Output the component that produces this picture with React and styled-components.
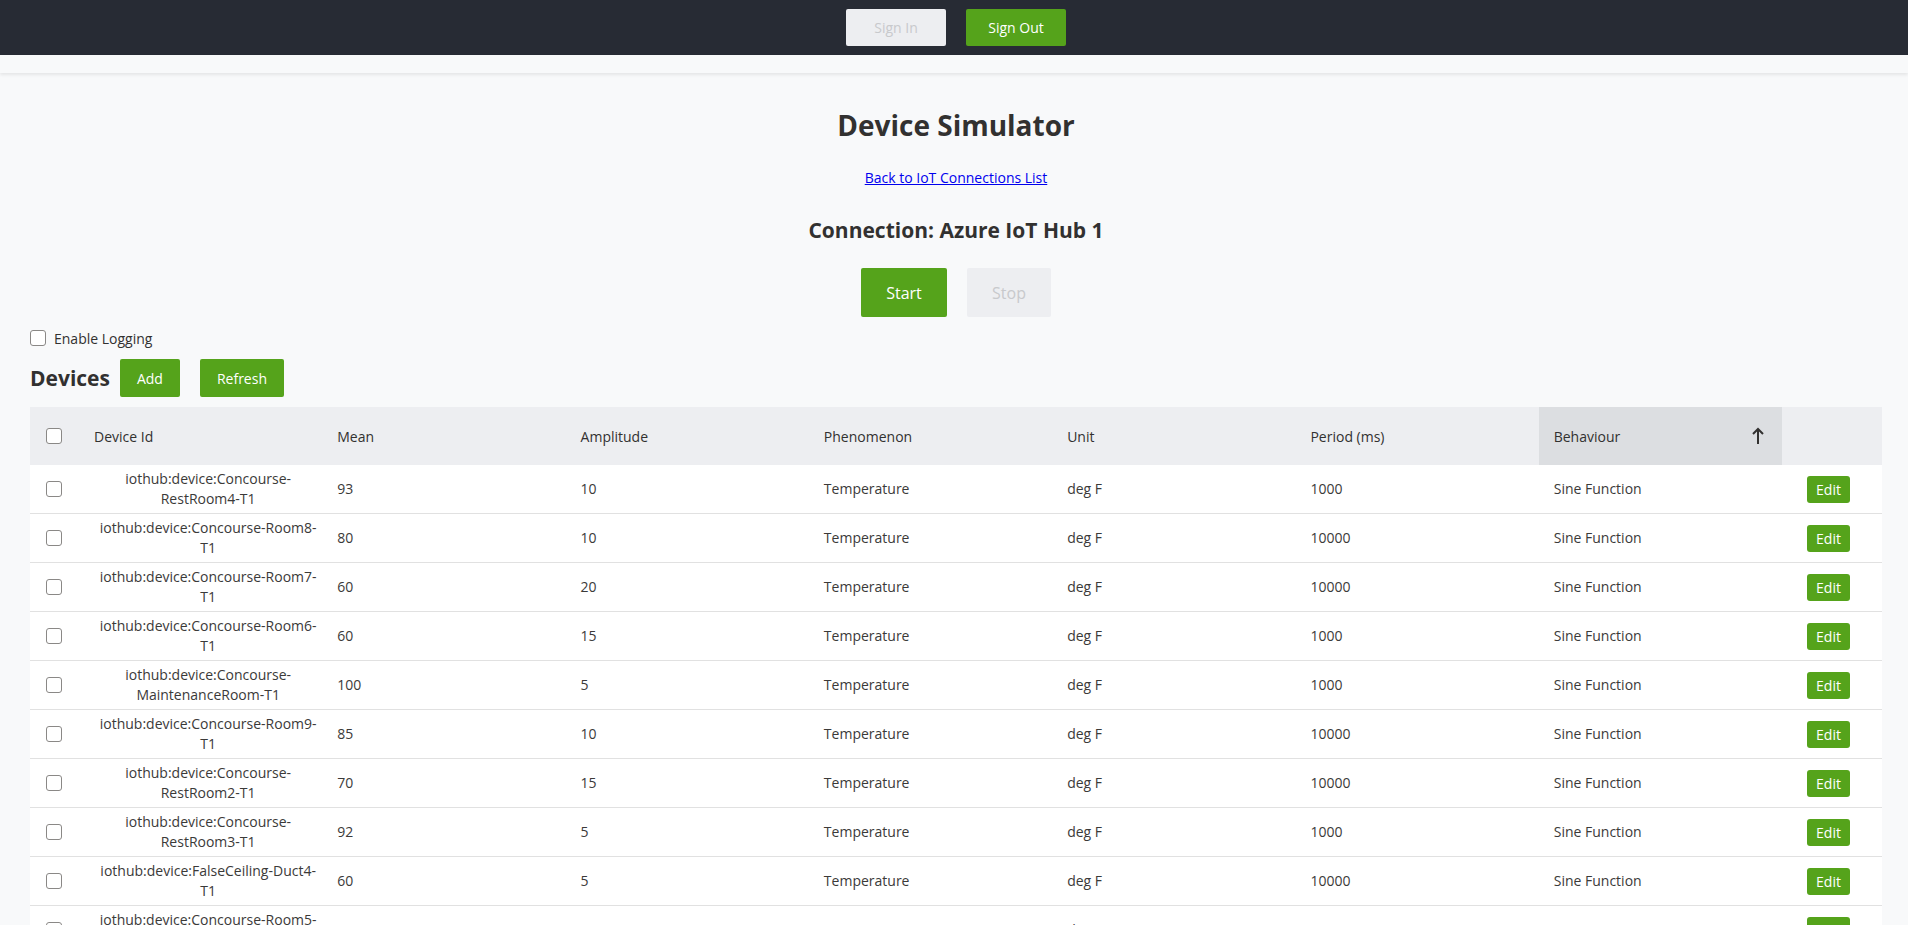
import React from "react";
import styled, { createGlobalStyle } from "styled-components";

const GlobalStyle = createGlobalStyle`
  *, *::before, *::after {
    box-sizing: border-box;
  }
  body {
    margin: 0;
    background: #f8f9fa;
    font-family: "Open Sans", "Liberation Sans", sans-serif;
    color: #323130;
  }
`;

const TopBar = styled.header`
  background-color: #272b34;
  height: 55px;
  display: flex;
  align-items: center;
  justify-content: center;
  gap: 20px;
  padding-left: 4px;
`;

const SubBar = styled.div`
  height: 18px;
  background: #f8f9fa;
  box-shadow: 0 2px 3px rgba(0, 0, 0, 0.08);
`;

const Button = styled.button`
  border: none;
  border-radius: 2px;
  font-family: inherit;
  font-size: ${(p) => (p.big ? "16px" : "14px")};
  height: ${(p) => (p.big ? "49px" : p.small ? "38px" : "37px")};
  width: ${(p) => p.w}px;
  padding: 0;
  background: ${(p) => (p.disabled ? "#edeef1" : "#55a31b")};
  color: ${(p) => (p.disabled ? "#c8c9cc" : "#ffffff")};
  cursor: ${(p) => (p.disabled ? "default" : "pointer")};
`;

const Page = styled.main`
  padding: 0 26px 0 30px;
`;

const Centered = styled.div`
  display: flex;
  flex-direction: column;
  align-items: center;
`;

const Title = styled.h1`
  font-size: 28px;
  font-weight: 700;
  margin: 33px 0 0;
  line-height: 38px;
`;

const BackLink = styled.a`
  font-size: 14px;
  color: #0000ee;
  text-decoration: underline;
  margin-top: 24px;
  line-height: 19px;
`;

const Connection = styled.h2`
  font-size: 21px;
  font-weight: 700;
  margin: 28px 0 0;
  line-height: 30px;
`;

const ButtonRow = styled.div`
  display: flex;
  gap: 20px;
  margin-top: 23px;
`;

const LoggingRow = styled.label`
  display: flex;
  align-items: center;
  gap: 8px;
  font-size: 14px;
  margin-top: 13px;
  height: 16px;
`;

const Box = styled.span`
  display: inline-block;
  width: 16px;
  height: 16px;
  border: 1px solid #8a8886;
  border-radius: 3px;
  background: #fff;
  flex-shrink: 0;
`;

const DevicesBar = styled.div`
  display: flex;
  align-items: center;
  margin-top: 13px;
  gap: 20px;
`;

const DevicesTitle = styled.h3`
  font-size: 21px;
  font-weight: 700;
  margin: 0 -10px 0 0;
`;

const Table = styled.div`
  margin-top: 10px;
  display: grid;
  grid-template-columns: 49px repeat(7, 1fr) 100px;
  font-size: 14px;
`;

const HeadCell = styled.div`
  background: ${(p) => (p.sorted ? "#dcdee1" : "#edeef1")};
  height: 58px;
  display: flex;
  align-items: center;
  justify-content: ${(p) => (p.sorted ? "space-between" : "flex-start")};
  padding: 0 ${(p) => (p.sorted ? "17px" : "0")} 0 ${(p) => p.pl ?? 15}px;
  color: #323130;
`;

const Cell = styled.div`
  background: #fff;
  border-bottom: 1px solid #e1e1e1;
  min-height: 49px;
  padding: 4px 0 4px ${(p) => p.pl ?? 15}px;
  display: flex;
  align-items: center;
  justify-content: ${(p) => (p.center ? "center" : "flex-start")};
  text-align: ${(p) => (p.center ? "center" : "left")};
  line-height: 20px;
  color: #3b3a39;
`;

const EditButton = styled.button`
  border: none;
  border-radius: 3px;
  background: #55a31b;
  color: #fff;
  font-family: inherit;
  font-size: 14px;
  width: 43px;
  height: 27px;
  padding: 0;
`;

const SortArrow = () => (
  <svg width="14" height="18" viewBox="0 0 14 18" fill="none" stroke="#323130" strokeWidth="2">
    <path d="M7 17V2" />
    <path d="M2 7l5-5 5 5" />
  </svg>
);

const devices = [
  ["iothub:device:Concourse-RestRoom4-T1", 93, 10, 1000],
  ["iothub:device:Concourse-Room8-T1", 80, 10, 10000],
  ["iothub:device:Concourse-Room7-T1", 60, 20, 10000],
  ["iothub:device:Concourse-Room6-T1", 60, 15, 1000],
  ["iothub:device:Concourse-MaintenanceRoom-T1", 100, 5, 1000],
  ["iothub:device:Concourse-Room9-T1", 85, 10, 10000],
  ["iothub:device:Concourse-RestRoom2-T1", 70, 15, 10000],
  ["iothub:device:Concourse-RestRoom3-T1", 92, 5, 1000],
  ["iothub:device:FalseCeiling-Duct4-T1", 60, 5, 10000],
  ["iothub:device:Concourse-Room5-T1", 75, 10, 1000],
];

const headers = ["Device Id", "Mean", "Amplitude", "Phenomenon", "Unit", "Period (ms)"];

export default function App() {
  return (
    <>
      <GlobalStyle />
      <TopBar>
        <Button w={100} disabled>Sign In</Button>
        <Button w={100}>Sign Out</Button>
      </TopBar>
      <SubBar />
      <Page>
        <Centered>
          <Title>Device Simulator</Title>
          <BackLink href="#">Back to IoT Connections List</BackLink>
          <Connection>Connection: Azure IoT Hub 1</Connection>
          <ButtonRow>
            <Button big w={86}>Start</Button>
            <Button big w={84} disabled>Stop</Button>
          </ButtonRow>
        </Centered>
        <LoggingRow>
          <Box />
          Enable Logging
        </LoggingRow>
        <DevicesBar>
          <DevicesTitle>Devices</DevicesTitle>
          <Button small w={60}>Add</Button>
          <Button small w={84}>Refresh</Button>
        </DevicesBar>
        <Table>
          <HeadCell pl={16}><Box /></HeadCell>
          {headers.map((h) => (
            <HeadCell key={h}>{h}</HeadCell>
          ))}
          <HeadCell sorted>
            Behaviour
            <SortArrow />
          </HeadCell>
          <HeadCell />
          {devices.map(([id, mean, amp, period]) => (
            <React.Fragment key={id}>
              <Cell pl={16}><Box /></Cell>
              <Cell center>{id}</Cell>
              <Cell>{mean}</Cell>
              <Cell>{amp}</Cell>
              <Cell>Temperature</Cell>
              <Cell>deg F</Cell>
              <Cell>{period}</Cell>
              <Cell>Sine Function</Cell>
              <Cell pl={25}><EditButton>Edit</EditButton></Cell>
            </React.Fragment>
          ))}
        </Table>
      </Page>
    </>
  );
}
